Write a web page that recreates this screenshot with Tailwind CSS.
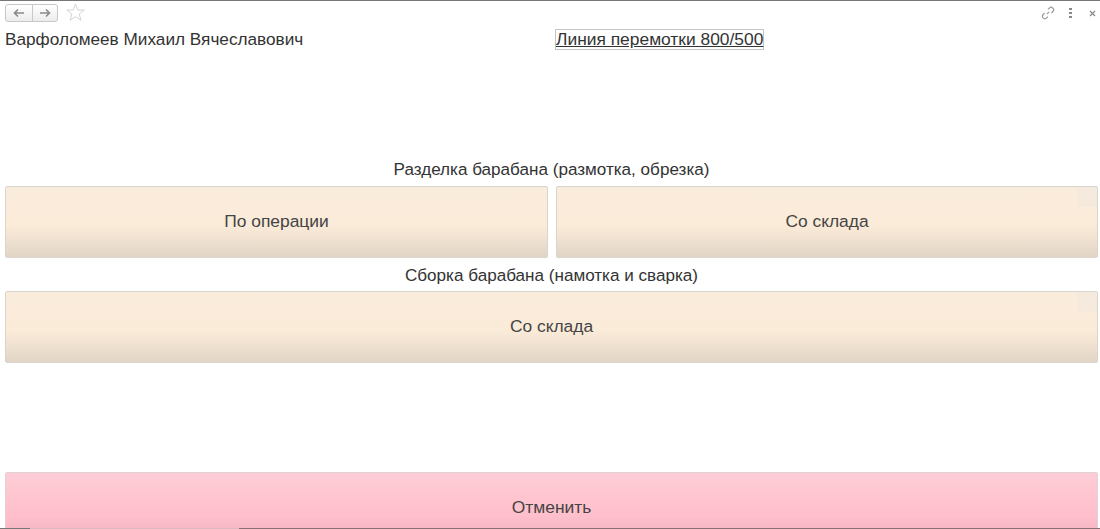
<!DOCTYPE html>
<html lang="ru">
<head>
    <meta charset="UTF-8">
    <title>Выбор операции</title>
    <script src="https://cdn.jsdelivr.net/npm/@tailwindcss/browser@4"></script>
</head>
<body class="bg-white h-[529px] w-[1100px] overflow-hidden relative font-['Liberation_Sans',sans-serif] text-[#333]">

    <!-- панель команд -->
    <div class="h-[27px] border-t border-[#777] flex items-start pl-[5px] pr-[4px] pt-[3px]">
        <div class="flex h-[18px] w-[53px] rounded-[3px] border border-[#c8c8c8] bg-gradient-to-b from-white to-[#ececec]">
            <div class="w-[27px] flex items-center justify-center border-r border-[#c8c8c8]">
                <svg width="12" height="10" viewBox="0 0 12 10" fill="none" stroke="#8a8a8a" stroke-width="1.6"><path d="M11 5H2M5 1.5 1.5 5 5 8.5"/></svg>
            </div>
            <div class="flex-1 flex items-center justify-center">
                <svg width="12" height="10" viewBox="0 0 12 10" fill="none" stroke="#8a8a8a" stroke-width="1.6"><path d="M1 5h9M7 1.5 10.5 5 7 8.5"/></svg>
            </div>
        </div>
        <svg class="ml-[8px] mt-[-1px]" width="19" height="19" viewBox="0 0 19 19" fill="#fff" stroke="#d4d4d4" stroke-width="1"><path d="M9.5 1.2 11.9 7h6.3l-5 4 1.8 6.3-5.5-3.6L4 17.3 5.8 11l-5-4h6.3z"/></svg>
        <div class="ml-auto flex items-center mt-[2px]">
            <svg class="mr-[14px]" width="14" height="14" viewBox="0 0 13 13" fill="none" stroke="#9a9a9a" stroke-width="1.1"><path d="M5.5 7.5 7.5 5.5M6.5 3.2l1.3-1.3a2.2 2.2 0 0 1 3.2 3.2L9.7 6.5M6.5 9.8l-1.3 1.3A2.2 2.2 0 0 1 2 7.9l1.3-1.3"/></svg>
            <div class="flex flex-col gap-[2px] mr-[17px]">
                <span class="w-[3px] h-[2px] bg-[#888]"></span>
                <span class="w-[3px] h-[2px] bg-[#888]"></span>
                <span class="w-[3px] h-[2px] bg-[#888]"></span>
            </div>
            <svg width="7" height="7" viewBox="0 0 7 7" fill="none" stroke="#8a8a8a" stroke-width="1.2"><path d="M1 1l5 5M6 1 1 6"/></svg>
        </div>
    </div>

    <!-- шапка -->
    <div class="flex h-[25px] pl-[5px] text-[17.2px] leading-[22px]">
        <div class="w-[550px] mt-[1px]">Варфоломеев Михаил Вячеславович</div>
        <a class="border border-[#c4c4c4] underline text-[17.4px] leading-[19px] h-[21px] mt-[2px]">Линия перемотки 800/500</a>
    </div>

    <div class="pl-[5px] pr-[2px]">
        <div class="mt-[103px] h-[31px] pb-[2px] flex items-center justify-center text-[17.1px]">Разделка барабана (размотка, обрезка)</div>
        <div class="flex gap-[8px]">
            <button class="w-[543px] h-[72px] pb-[2px] border border-[#d8d4ce] rounded-[2px] bg-gradient-to-b from-[#faecdc] via-[#fbebd9] via-55% to-[#e2d5c6] text-[17.4px] text-[#444]">По операции</button>
            <button class="relative w-[542px] h-[72px] pb-[2px] border border-[#d8d4ce] rounded-[2px] bg-gradient-to-b from-[#faecdc] via-[#fbebd9] via-55% to-[#e2d5c6] text-[17.4px] text-[#444]">
                Со склада
                <span class="absolute top-0 right-0 w-[20px] h-[20px] bg-[#e8e4e4]/25"></span>
            </button>
        </div>
        <div class="h-[33px] pt-[2px] flex items-center justify-center text-[17.1px]">Сборка барабана (намотка и сварка)</div>
        <button class="relative w-full h-[72px] pb-[2px] border border-[#d8d4ce] rounded-[2px] bg-gradient-to-b from-[#faecdc] via-[#fbebd9] via-55% to-[#e2d5c6] text-[17.4px] text-[#444]">
            Со склада
            <span class="absolute top-0 right-0 w-[20px] h-[20px] bg-[#e8e4e4]/25"></span>
        </button>
        <button class="mt-[109px] w-full h-[72px] pb-[2px] border border-[#e2d2d6] rounded-[2px] bg-gradient-to-b from-[#fdcdd6] via-[#ffbfcc] via-60% to-[#eeb0bd] text-[17.4px] text-[#444]">Отменить</button>
    </div>

    <!-- полоса снизу -->
    <div class="absolute bottom-0 left-0 right-0 h-px flex">
        <div class="w-[30px] bg-[#777]"></div>
        <div class="w-[209px] bg-[#ddb8c0]"></div>
        <div class="flex-1 bg-[#8a7075]"></div>
    </div>
</body>
</html>
